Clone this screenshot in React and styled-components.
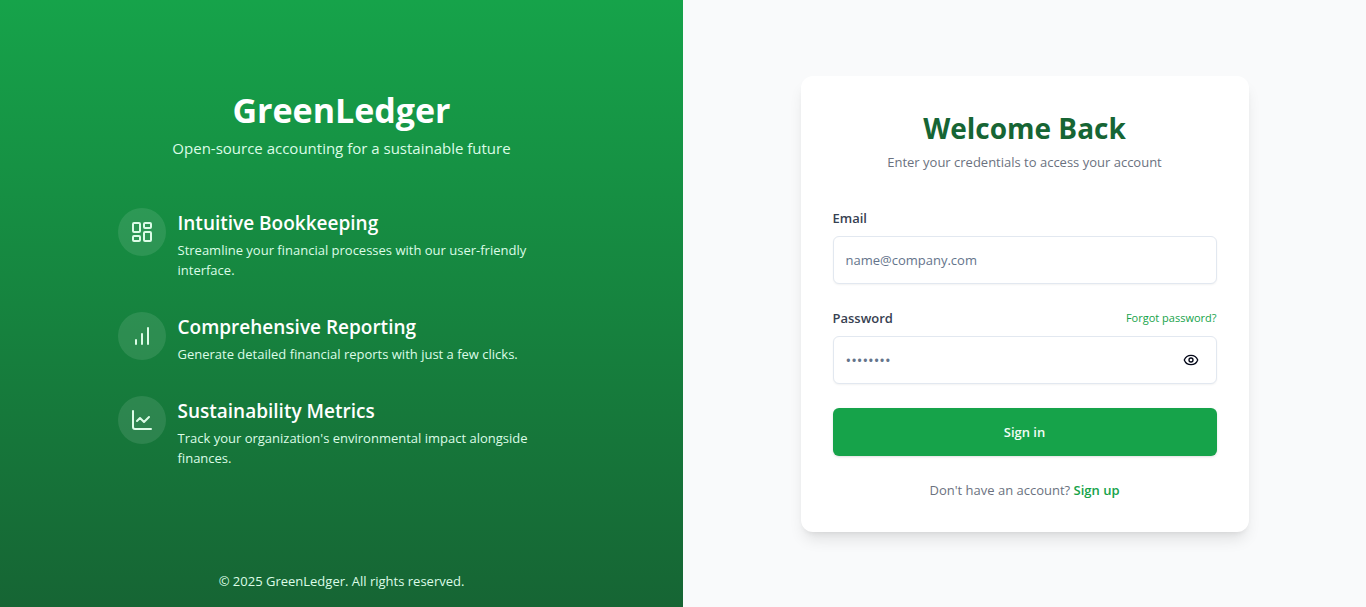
import React, { useState } from "react";
import styled, { createGlobalStyle } from "styled-components";
import { LayoutDashboard, ChartLine, Eye, EyeOff } from "lucide-react";

const GlobalStyle = createGlobalStyle`
  *, *::before, *::after { box-sizing: border-box; }
  body {
    margin: 0;
    font-family: "Segoe UI", "Open Sans", "Noto Sans", sans-serif;
    font-size: 13px;
    line-height: 20px;
  }
  h1, h2, h3, p, ul { margin: 0; padding: 0; }
  button, input { font: inherit; }
`;

const Page = styled.div`
  display: grid;
  grid-template-columns: 1fr 1fr;
  min-height: 100vh;
  background: #f9fafb;
  @media (max-width: 800px) { grid-template-columns: 1fr; }
`;

const BrandPanel = styled.section`
  display: flex;
  flex-direction: column;
  align-items: center;
  padding: 32px 48px 16px;
  background: linear-gradient(to bottom, #16a34a, #166534);
  color: #dcfce7;
`;

const BrandContent = styled.div`
  flex: 1;
  display: flex;
  flex-direction: column;
  justify-content: center;
  width: 100%;
  max-width: 448px;
  padding-bottom: 48px;
`;

const BrandName = styled.h1`
  color: #fff;
  font-size: 34px;
  line-height: 44px;
  font-weight: 700;
  text-align: center;
`;

const Tagline = styled.p`
  margin-top: 4px;
  font-size: 15px;
  line-height: 24px;
  text-align: center;
`;

const FeatureList = styled.ul`
  display: flex;
  flex-direction: column;
  gap: 32px;
  margin-top: 48px;
  list-style: none;
`;

const Feature = styled.li`
  display: flex;
  align-items: flex-start;
  gap: 12px;
`;

const FeatureIcon = styled.span`
  display: flex;
  flex: none;
  padding: 12px;
  border-radius: 50%;
  background: rgba(255, 255, 255, 0.1);
`;

const FeatureText = styled.div`
  max-width: 376px;
`;

const FeatureTitle = styled.h2`
  margin-bottom: 2px;
  color: #fff;
  font-size: 19px;
  line-height: 30px;
  font-weight: 600;
`;

const FormPanel = styled.main`
  display: flex;
  align-items: center;
  justify-content: center;
  padding: 32px;
`;

const Card = styled.div`
  width: 100%;
  max-width: 448px;
  padding: 32px;
  border-radius: 12px;
  background: #fff;
  box-shadow: 0 10px 15px -3px rgba(0, 0, 0, 0.1), 0 4px 6px -4px rgba(0, 0, 0, 0.1);
  color: #6b7280;
  text-align: center;
`;

const CardTitle = styled.h2`
  margin-bottom: 4px;
  color: #166534;
  font-size: 28px;
  line-height: 40px;
  font-weight: 700;
`;

const Form = styled.form`
  display: flex;
  flex-direction: column;
  gap: 24px;
  margin: 36px 0 24px;
`;

const Field = styled.div`
  display: flex;
  flex-direction: column;
  gap: 8px;
`;

const LabelRow = styled.div`
  display: flex;
  align-items: center;
  justify-content: space-between;
`;

const Label = styled.label`
  color: #374151;
  font-weight: 600;
`;

const TextLink = styled.a`
  color: #16a34a;
  font-size: ${(p) => (p.$small ? 11 : 13)}px;
  font-weight: ${(p) => (p.$small ? 400 : 600)};
  text-decoration: none;
  &:hover { text-decoration: underline; }
`;

const InputBox = styled.div`
  display: flex;
  align-items: center;
  height: 48px;
  border: 1px solid #e2e8f0;
  border-radius: 6px;
  background: #fff;
  box-shadow: 0 1px 2px rgba(0, 0, 0, 0.05);
  &:focus-within { border-color: #16a34a; }
`;

const Input = styled.input`
  flex: 1;
  min-width: 0;
  height: 100%;
  padding: 0 12px;
  border: 0;
  outline: 0;
  background: transparent;
  color: #0f172a;
  font-size: ${(p) => (p.$masked ? 15 : 13)}px;
  &::placeholder { color: #64748b; opacity: 1; }
`;

const RevealButton = styled.button`
  display: flex;
  margin-right: 9px;
  padding: 8px;
  border: 0;
  background: transparent;
  color: #020617;
  cursor: pointer;
`;

const SubmitButton = styled.button`
  height: 48px;
  border: 0;
  border-radius: 6px;
  background: #16a34a;
  box-shadow: 0 1px 3px rgba(0, 0, 0, 0.1), 0 1px 2px -1px rgba(0, 0, 0, 0.1);
  color: #f0fdf4;
  font-weight: 600;
  cursor: pointer;
`;

function BarsIcon({ size }) {
  return (
    <svg
      width={size}
      height={size}
      viewBox="0 0 24 24"
      fill="none"
      stroke="currentColor"
      strokeWidth="2"
      strokeLinecap="round"
      aria-hidden="true"
    >
      <path d="M6 20v-4M12 20V10M18 20V4" />
    </svg>
  );
}

const features = [
  {
    icon: LayoutDashboard,
    title: "Intuitive Bookkeeping",
    text: "Streamline your financial processes with our user-friendly interface.",
  },
  {
    icon: BarsIcon,
    title: "Comprehensive Reporting",
    text: "Generate detailed financial reports with just a few clicks.",
  },
  {
    icon: ChartLine,
    title: "Sustainability Metrics",
    text: "Track your organization's environmental impact alongside finances.",
  },
];

export default function App() {
  const [visible, setVisible] = useState(false);
  return (
    <>
      <GlobalStyle />
      <Page>
        <BrandPanel>
          <BrandContent>
            <BrandName>GreenLedger</BrandName>
            <Tagline>Open-source accounting for a sustainable future</Tagline>
            <FeatureList>
              {features.map(({ icon: Icon, title, text }) => (
                <Feature key={title}>
                  <FeatureIcon><Icon size={24} /></FeatureIcon>
                  <FeatureText>
                    <FeatureTitle>{title}</FeatureTitle>
                    <p>{text}</p>
                  </FeatureText>
                </Feature>
              ))}
            </FeatureList>
          </BrandContent>
          <p>© 2025 GreenLedger. All rights reserved.</p>
        </BrandPanel>
        <FormPanel>
          <Card>
            <CardTitle>Welcome Back</CardTitle>
            <p>Enter your credentials to access your account</p>
            <Form onSubmit={(e) => e.preventDefault()}>
              <Field>
                <LabelRow>
                  <Label htmlFor="email">Email</Label>
                </LabelRow>
                <InputBox>
                  <Input id="email" type="email" placeholder="name@company.com" />
                </InputBox>
              </Field>
              <Field>
                <LabelRow>
                  <Label htmlFor="password">Password</Label>
                  <TextLink $small href="#forgot">Forgot password?</TextLink>
                </LabelRow>
                <InputBox>
                  <Input
                    id="password"
                    $masked
                    type={visible ? "text" : "password"}
                    placeholder="••••••••"
                  />
                  <RevealButton
                    type="button"
                    aria-label={visible ? "Hide password" : "Show password"}
                    onClick={() => setVisible(!visible)}
                  >
                    {visible ? <EyeOff size={16} /> : <Eye size={16} />}
                  </RevealButton>
                </InputBox>
              </Field>
              <SubmitButton type="submit">Sign in</SubmitButton>
            </Form>
            <p>Don't have an account? <TextLink href="#signup">Sign up</TextLink></p>
          </Card>
        </FormPanel>
      </Page>
    </>
  );
}
